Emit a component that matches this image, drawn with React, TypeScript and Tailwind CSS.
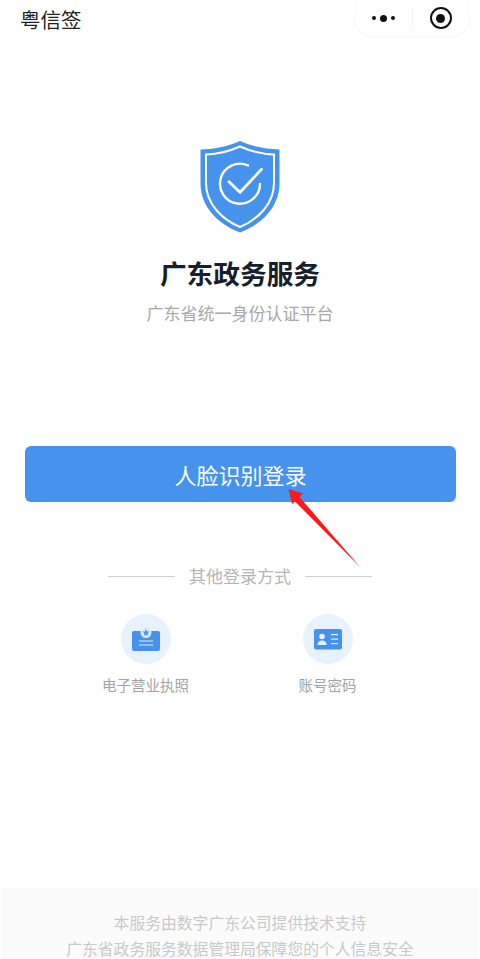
const cjk = { fontFamily: '"Noto Sans CJK SC", "Liberation Sans", sans-serif' };

function Shield() {
  return (
    <svg width="80" height="92" viewBox="0 0 80 92" className="block">
      <path
        d="M40 0C30 5 15 8 0.500 8.500V42C0.500 66 18 83 40 91.500C62 83 79.500 66 79.500 42V8.500C65 8 50 5 40 0Z"
        fill="#4693EE"
      />
      <path
        d="M40 5.500C30 10 18 13 6 13.500V42C6 62 21 78 40 86C59 78 74 62 74 42V13.500C62 13 50 10 40 5.500Z"
        fill="none"
        stroke="#fff"
        strokeWidth="2"
      />
      <path
        d="M48 24.400A20 20 0 1 0 60 43"
        fill="none"
        stroke="#fff"
        strokeWidth="2.400"
        strokeLinecap="round"
      />
      <path
        d="M29 40.700L40 51.300L61.500 28.300"
        fill="none"
        stroke="#fff"
        strokeWidth="2.800"
        strokeLinecap="round"
        strokeLinejoin="round"
      />
    </svg>
  );
}

function LicenseIcon() {
  return (
    <svg width="30" height="30" viewBox="0 0 30 30" className="block">
      <rect x="1" y="7" width="28" height="20" rx="2" fill="#4693EE" />
      <circle cx="15" cy="8.500" r="5.500" fill="#DCEBFB" />
      <path d="M15 5L16 7.400L18.500 7.600L16.600 9.300L17.200 11.800L15 10.500L12.800 11.800L13.400 9.300L11.500 7.600L14 7.400Z" fill="#4693EE" />
      <rect x="8" y="16.500" width="14" height="1" fill="#DCEBFB" />
      <rect x="8" y="20.500" width="14" height="1" fill="#DCEBFB" />
    </svg>
  );
}

function AccountIcon() {
  return (
    <svg width="28" height="21" viewBox="0 0 28 21" className="block">
      <rect width="28" height="20.500" rx="2" fill="#4693EE" />
      <circle cx="8" cy="7.500" r="2.800" fill="#E8F2FC" />
      <path d="M3.500 16C3.500 12.500 6 11.500 8 11.500C10 11.500 12.500 12.500 12.500 16Z" fill="#E8F2FC" />
      <rect x="17" y="5" width="7" height="1.200" fill="#E8F2FC" />
      <rect x="17" y="9.500" width="7" height="1.200" fill="#E8F2FC" />
      <rect x="17" y="14" width="7" height="1.200" fill="#E8F2FC" />
    </svg>
  );
}

function LoginOption({ label, children }: { label: string; children: React.ReactNode }) {
  return (
    <div className="flex w-[100px] flex-col items-center">
      <div className="flex h-[50px] w-[50px] items-center justify-center rounded-full bg-[#E8F2FC]">{children}</div>
      <span className="mt-[11px] whitespace-nowrap text-[14.500px] leading-[20px] text-[#a3a3a3]">{label}</span>
    </div>
  );
}

export default function App() {
  return (
    <div className="flex h-[959px] flex-col overflow-hidden bg-white" style={cjk}>
      {/* Top bar */}
      <div className="flex items-start justify-between pl-[20px] pr-[10px]">
        <span className="mt-[5px] text-[20.500px] leading-[28px] text-[#222]">粤信签</span>
        <div className="flex h-[37px] w-[116px] items-center rounded-b-[18px] rounded-t-none border-x border-b border-[#f7f7f7]">
          <div className="flex flex-1 items-center justify-center gap-[4px]">
            <span className="h-[4px] w-[4px] rounded-full bg-[#111]" />
            <span className="h-[7px] w-[7px] rounded-full bg-[#111]" />
            <span className="h-[4px] w-[4px] rounded-full bg-[#111]" />
          </div>
          <div className="h-[20px] w-px bg-[#f3f3f3]" />
          <div className="flex flex-1 items-center justify-center">
            <div className="flex h-[22px] w-[22px] items-center justify-center rounded-full border-[2.5px] border-[#111]">
              <span className="h-[9px] w-[9px] rounded-full bg-[#111]" />
            </div>
          </div>
        </div>
      </div>

      {/* Brand */}
      <div className="mt-[104px] flex flex-col items-center">
        <Shield />
        <h1 className="mt-[22px] text-[26.700px] font-bold leading-[36px] text-[#16202c]">广东政务服务</h1>
        <p className="mt-[10px] text-[17px] leading-[24px] text-[#a8a8a8]">广东省统一身份认证平台</p>
      </div>

      {/* Login button */}
      <div className="relative ml-[25px] mr-[24px] mt-[121px]">
        <button className="flex h-[56px] w-full items-center justify-center rounded-[6px] bg-[#4693EE] text-[22px] text-white">
          人脸识别登录
        </button>
        <svg width="80" height="90" viewBox="0 0 80 90" className="absolute left-[260px] top-[40px]">
          <path d="M3.500 3L18 7.500L14.500 11L76 82L10 15.500L7 18Z" fill="#FB1B1B" />
        </svg>
      </div>

      {/* Other methods */}
      <div className="mt-[63px] flex items-center justify-center gap-[14px]">
        <div className="h-px w-[67px] bg-[#cfcfcf]" />
        <span className="text-[17px] leading-[22px] text-[#b5b5b5]">其他登录方式</span>
        <div className="h-px w-[67px] bg-[#cfcfcf]" />
      </div>
      <div className="mt-[27px] flex justify-center gap-[82px] pr-[7px]">
        <LoginOption label="电子营业执照">
          <LicenseIcon />
        </LoginOption>
        <LoginOption label="账号密码">
          <AccountIcon />
        </LoginOption>
      </div>

      {/* Footer */}
      <div className="mx-[1px] mt-auto flex h-[71px] flex-col gap-[10px] bg-[#fbfbfb] pt-[27px] text-center text-[15.800px] leading-[16px] text-[#c9c9c9]">
        <p>本服务由数字广东公司提供技术支持</p>
        <p>广东省政务服务数据管理局保障您的个人信息安全</p>
      </div>
    </div>
  );
}
